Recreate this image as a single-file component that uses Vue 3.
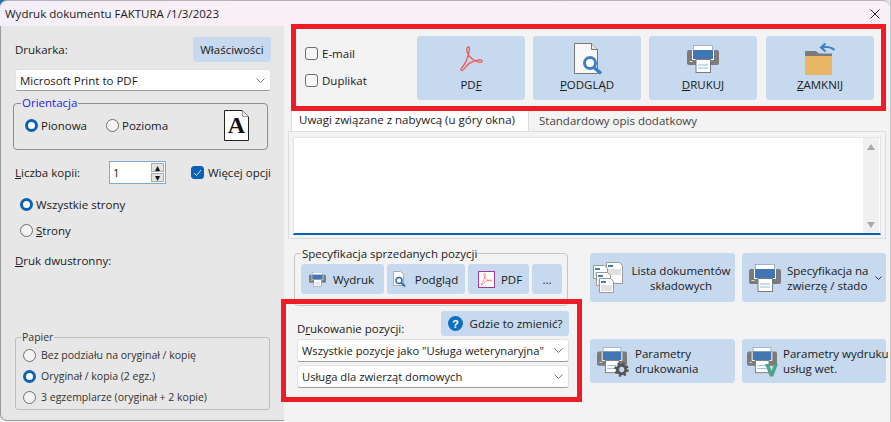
<script setup>
const topButtons = [
  { key: 'pdf', pre: 'PD', u: 'F', post: '' },
  { key: 'preview', pre: '', u: 'P', post: 'ODGLĄD' },
  { key: 'print', pre: '', u: 'D', post: 'RUKUJ' },
  { key: 'close', pre: '', u: 'Z', post: 'AMKNIJ' },
]
const docPages = [
  { x: 13, y: 0, w: 17, h: 22 },
  { x: 0, y: 3, w: 15, h: 14 },
  { x: 3, y: 10, w: 15, h: 14 },
  { x: 6, y: 16, w: 15, h: 15 },
]
</script>

<template>
  <div class="win">
    <svg width="0" height="0" class="defs">
      <defs>
        <symbol id="printer" viewBox="0 0 32 28">
          <rect x="6.500" y=".5" width="19" height="6" fill="#fff" stroke="#6f8fb0" stroke-width=".6"/>
          <path d="M2 5h28a2 2 0 0 1 2 2v11a2 2 0 0 1-2 2H2a2 2 0 0 1-2-2V7a2 2 0 0 1 2-2z" fill="#7b7b7b"/>
          <rect x="6" y="5" width="20" height="9" fill="#3f76b3"/>
          <path d="M5.500 5v9.500h21V5" fill="none" stroke="#fff"/>
          <rect x="2.500" y="16" width="3" height="1" fill="#ddd"/>
          <rect x="9" y="14.500" width="14.500" height="13" fill="#fff" stroke="#7b7b7b"/>
          <path d="M11 20h10M11 23h10" stroke="#8fb8dd"/>
        </symbol>
        <symbol id="acro" viewBox="0 0 24 26">
          <path d="M9.500 1C11 1 10.500 4 9.500 8 8.500 12 6 18 3.500 21 2 23 1.500 24 2.500 24.500 4 25 6 22 8 19.500 10 17 14 15 20 14 23 13.500 23.500 15 22.500 16 21 17 18 16 15.500 14.500 12 12.500 9 9 8 5.500 7.500 3 8 1 9.500 1z" fill="none" stroke="#ee5a58" stroke-width="1.300"/>
        </symbol>
      </defs>
    </svg>

    <header class="title">
      <span>Wydruk dokumentu FAKTURA /1/3/2023</span>
      <svg class="x" width="10" height="10" viewBox="0 0 10 10"><path d="M.5.5l9 9M9.500.5l-9 9" stroke="#222" fill="none"/></svg>
    </header>

    <div class="body">
      <aside class="left">
        <div class="row printer-head">
          <span>Drukarka:</span>
          <button class="btn props">Właściwości</button>
        </div>
        <div class="select printer"><span>Microsoft Print to PDF</span><svg class="chev" width="9" height="5" viewBox="0 0 9 5"><path d="M.5.500L4.500 4.500 8.500.5" fill="none" stroke="#777"/></svg></div>

        <fieldset class="orient">
          <legend>Orientacja</legend>
          <div class="orient-row">
            <label class="radio on"><i></i>Pionowa</label>
            <label class="radio"><i></i>Pozioma</label>
            <div class="page">
              <svg width="25" height="31" viewBox="0 0 25 31"><path d="M.5.500h18l6 6v24H.5z" fill="#fff" stroke="#222"/><path d="M18.500.500v6h6" fill="#eee" stroke="#999"/></svg>
              <b>A</b>
            </div>
          </div>
        </fieldset>

        <div class="row copies">
          <span class="copies-label"><u>L</u>iczba kopii:</span>
          <div class="spin">
            <span>1</span>
            <div class="arrows"><em>▴</em><em>▾</em></div>
          </div>
          <label class="check on"><i><svg width="9" height="8" viewBox="0 0 9 8"><path d="M1 4l2.500 2.500L8 1" fill="none" stroke="#cfe2f5"/></svg></i>Więcej opcji</label>
        </div>

        <div class="pages">
          <label class="radio on"><i></i>Wszystkie strony</label>
          <label class="radio"><i></i><span><u>S</u>trony</span></label>
        </div>

        <div class="duplex"><u>D</u>ruk dwustronny:</div>

        <fieldset class="paper">
          <legend>Papier</legend>
          <label class="radio"><i></i>Bez podziału na oryginał / kopię</label>
          <label class="radio on"><i></i>Oryginał / kopia (2 egz.)</label>
          <label class="radio"><i></i>3 egzemplarze (oryginał + 2 kopie)</label>
        </fieldset>
      </aside>

      <main class="right">
        <section class="actions">
          <div class="opts">
            <label class="check"><i></i>E-mail</label>
            <label class="check"><i></i>Duplikat</label>
          </div>
          <button v-for="b in topButtons" :key="b.key" class="btn big">
            <span class="big-icon">
              <svg v-if="b.key === 'pdf'" width="24" height="26"><use href="#acro"/></svg>
              <svg v-else-if="b.key === 'preview'" width="36" height="32" viewBox="0 0 36 32">
                <path d="M5.500 .5h17l6 6v24h-23z" fill="#f8f8f8" stroke="#777"/>
                <path d="M22.500.5v6h6" fill="#e6e6e6" stroke="#777"/>
                <circle cx="21" cy="20" r="5.500" fill="#fff" stroke="#3f7fbd" stroke-width="3"/>
                <path d="M25 24.500l7 6" stroke="#3f7fbd" stroke-width="3.500"/>
              </svg>
              <svg v-else-if="b.key === 'print'" width="32" height="28"><use href="#printer"/></svg>
              <svg v-else width="30" height="32" viewBox="0 0 30 32">
                <path d="M0 8h11l3 2.500H27V14H0z" fill="#7b7b7b"/>
                <rect x="0" y="13" width="27" height="19" fill="#e8b765"/>
                <path d="M29.500 7c-3-3-9-4-13-2M20.500 0.500L16 4.500l4.500 4" fill="none" stroke="#3f7fbd" stroke-width="2"/>
              </svg>
            </span>
            <span>{{ b.pre }}<u>{{ b.u }}</u>{{ b.post }}</span>
          </button>
        </section>

        <nav class="tabs">
          <span class="tab active">Uwagi związane z nabywcą (u góry okna)</span>
          <span class="tab">Standardowy opis dodatkowy</span>
        </nav>
        <div class="tab-panel">
          <div class="memo">
            <div class="scroll"><em></em><em class="down"></em></div>
          </div>
        </div>

        <div class="lower">
          <div class="lower-left">
            <fieldset class="spec">
              <legend>Specyfikacja sprzedanych pozycji</legend>
              <div class="spec-row">
                <button class="btn w1">
                  <svg width="17" height="15"><use href="#printer"/></svg>Wydruk
                </button>
                <button class="btn w2">
                  <svg width="16" height="16" viewBox="0 0 16 16"><path d="M1.500.5h7l3 3v11h-10z" fill="#fff" stroke="#aaa"/><circle cx="7" cy="9.500" r="3" fill="#fff" stroke="#2f6cae" stroke-width="1.500"/><path d="M9.500 12l3.500 3.500" stroke="#2f6cae" stroke-width="2"/></svg>Podgląd
                </button>
                <button class="btn w3">
                  <span class="pdf-mini"><svg width="12" height="13"><use href="#acro"/></svg></span>PDF
                </button>
                <button class="btn w4">...</button>
              </div>
            </fieldset>

            <div class="pos">
              <div class="pos-head">
                <span>D<u>r</u>ukowanie pozycji:</span>
                <button class="btn where">
                  <svg width="15" height="15" viewBox="0 0 16 16"><circle cx="8" cy="8" r="8" fill="#1070c0"/><text x="8" y="12.500" text-anchor="middle" font-size="12" font-weight="700" fill="#fff" font-family="Liberation Sans">?</text></svg>
                  Gdzie to zmienić?
                </button>
              </div>
              <div class="select pos-sel"><span>Wszystkie pozycje jako "Usługa weterynaryjna"</span><svg class="chev" width="9" height="5" viewBox="0 0 9 5"><path d="M.5.500L4.500 4.500 8.500.5" fill="none" stroke="#777"/></svg></div>
              <div class="select pos-sel"><span>Usługa dla zwierząt domowych</span><svg class="chev" width="9" height="5" viewBox="0 0 9 5"><path d="M.5.500L4.500 4.500 8.500.5" fill="none" stroke="#777"/></svg></div>
            </div>
          </div>

          <div class="tools">
            <button class="btn tool tall t1">
              <svg width="30" height="31" viewBox="0 0 30 31">
                <g v-for="(p, i) in docPages" :key="i" :transform="`translate(${p.x},${p.y})`">
                  <path :d="`M.5.500h${p.w - 4}l3 3v${p.h - 4}H.5z`" fill="#fff" stroke="#999"/>
                  <rect x="2" y="3" width="5" height="2" fill="#3f7fbd"/>
                  <path :d="`M2 8h${p.w - 4}M2 10h${p.w - 4}M2 12h${p.w - 4}`" stroke="#aaa" stroke-width=".7"/>
                </g>
              </svg>
              <span class="center">Lista dokumentów<br>składowych</span>
            </button>
            <button class="btn tool tall t2">
              <svg width="32" height="30"><use href="#printer"/></svg>
              <span>Specyfikacja na<br>zwierzę / stado</span>
              <svg class="chev small" width="7" height="4" viewBox="0 0 7 4"><path d="M.5.500L3.500 3.500 6.500.5" fill="none" stroke="#333"/></svg>
            </button>
            <button class="btn tool t3">
              <span class="ic">
                <svg width="30" height="28"><use href="#printer"/></svg>
                <svg class="over gear" width="15" height="15" viewBox="0 0 16 16"><circle cx="8" cy="8" r="4.500" fill="none" stroke="#555" stroke-width="3"/><circle cx="8" cy="8" r="6.500" fill="none" stroke="#555" stroke-width="2.500" stroke-dasharray="2.500 2.600"/></svg>
              </span>
              <span>Parametry<br>drukowania</span>
            </button>
            <button class="btn tool t4">
              <span class="ic">
                <svg width="30" height="28"><use href="#printer"/></svg>
                <svg class="over vee" width="17" height="14" viewBox="0 0 14 13"><path d="M1 1h3.500L7 7.500 9.500 1H13L8.500 12.500h-3z" fill="#4aa684"/></svg>
              </span>
              <span>Parametry wydruku<br>usług wet.</span>
            </button>
          </div>
        </div>
      </main>
    </div>

    <div class="mark mark-top"></div>
    <div class="mark mark-bottom"></div>
  </div>
</template>

<style>
html, body { margin: 0; background: #f3f3f3; }
</style>

<style scoped>
.win {
  position: relative;
  width: 891px;
  height: 422px;
  box-sizing: border-box;
  border-right: 1px solid #c4c4c4;
  overflow: hidden;
  font-family: "Open Sans", "Liberation Sans", sans-serif;
  font-size: 11.500px;
  color: #1a1a1a;
  background: linear-gradient(90deg, #2a6fb0 28px, #e4e4e4 28px) top / 100% 8px no-repeat, #f3f3f3;
}
.defs { position: absolute; }
.title {
  height: 26px;
  box-sizing: border-box;
  padding: 0 10px 0 5px;
  display: flex;
  align-items: center;
  justify-content: space-between;
  background: linear-gradient(90deg, #f3eef7, #faf0f5 30%, #f8f0f6);
  border-top: 1px solid #b4b4b4;
  border-radius: 7px 7px 0 0;
  font-size: 11.500px;
}
.body { display: flex; height: 396px; }
.left {
  width: 284px;
  box-sizing: border-box;
  padding: 11px 13px 0 14px;
  background: #e7e7e7;
  border-left: 1px solid #9a9a9a;
  border-bottom: 1px solid #9a9a9a;
  border-bottom-left-radius: 7px;
  margin-bottom: 1px;
  flex: none;
}
.row { display: flex; align-items: center; }
.printer-head { justify-content: space-between; height: 25px; }
.btn {
  border: 0;
  padding: 0;
  margin: 0;
  background: #c6d9ee;
  border-radius: 3px;
  font: inherit;
  color: inherit;
  display: flex;
  align-items: center;
  justify-content: center;
}
.props { width: 78px; height: 25px; }
.select {
  display: flex;
  align-items: center;
  justify-content: space-between;
  background: #fff;
  border-radius: 3px;
  box-sizing: border-box;
  padding: 0 5px 0 4px;
  border: 1px solid #e2e2e2;
  border-bottom-color: #9c9c9c;
}
.printer { width: 256px; height: 22px; margin-top: 7px; }
fieldset { margin: 0; min-width: 0; box-sizing: border-box; }
.orient {
  width: 255px;
  height: 54px;
  margin: 5px 0 0 -2px;
  padding: 0 8px 0 11px;
  border: 1px solid #8e8e8e;
  border-radius: 4px;
}
.orient legend { color: #2222ee; padding: 0 1px; margin-left: -4px; line-height: 14px; }
.orient-row { display: flex; align-items: center; height: 31px; }
.radio { display: flex; align-items: center; white-space: nowrap; }
.radio i {
  width: 13px;
  height: 13px;
  box-sizing: border-box;
  border: 1px solid #6e6e6e;
  border-radius: 50%;
  background: #f4f4f4;
  margin-right: 3px;
  flex: none;
}
.radio.on i { border: 3.500px solid #0a62b4; background: #fff; }
.orient .radio + .radio { margin-left: 19px; }
.page { position: relative; margin-left: auto; margin-right: 10px; height: 31px; width: 25px; margin-top: -1px; }
.page svg { display: block; }
.page b { position: absolute; left: 0; right: 0; top: 2px; text-align: center; font: 700 24px "Liberation Serif", serif; color: #111; }
.copies { margin-top: 11px; height: 23px; }
.copies-label { width: 94px; flex: none; }
.spin {
  width: 57px;
  height: 23px;
  box-sizing: border-box;
  border: 1px solid #7fa9d6;
  background: #fff;
  display: flex;
  align-items: center;
  justify-content: space-between;
  padding: 0 1px 0 3px;
}
.arrows { display: flex; flex-direction: column; width: 13px; gap: 1px; }
.arrows em {
  background: #e4e4e4;
  border: 1px solid #aaa;
  font: 10px/7px "DejaVu Sans", sans-serif;
  text-align: center;
  color: #111;
  box-sizing: content-box;
  height: 7px;
  width: 11px;
}
.check { display: flex; align-items: center; white-space: nowrap; }
.check i {
  width: 13px;
  height: 13px;
  box-sizing: border-box;
  border: 1px solid #6e6e6e;
  border-radius: 3px;
  background: #f6f6f6;
  margin-right: 4px;
  display: flex;
  align-items: center;
  justify-content: center;
}
.check.on i { background: #0a62b4; border-color: #0a62b4; }
.copies .check { margin-left: 25px; }
.pages { display: flex; flex-direction: column; gap: 13px; margin: 14px 0 0 5px; }
.pages .radio { height: 13px; }
.duplex { margin-top: 16px; line-height: 16px; }
.paper {
  width: 255px;
  height: 79px;
  margin-top: 62px;
  padding: 0 0 0 7px;
  border: 1px solid #bdbdbd;
  border-radius: 3px;
  font-size: 10.500px;
  display: flex;
  flex-direction: column;
  gap: 7px;
  color: #333;
}
.paper legend { padding: 0 1px; margin-left: -2px; line-height: 13px; }
.paper .radio { height: 14px; }
.paper .radio i { margin-right: 5px; }
.paper .radio:first-of-type { margin-top: 4px; }
.right { flex: 1; min-width: 0; padding: 10px 4px 0 4px; }
.actions { display: flex; align-items: stretch; height: 64px; gap: 8px; padding-left: 17px; }
.opts { width: 104px; display: flex; flex-direction: column; justify-content: space-between; flex: none; box-sizing: border-box; padding: 10px 0 12px; }
.big { flex-direction: column; width: 108px; justify-content: flex-start; padding-top: 6px; box-sizing: border-box; }
.big:last-child { margin-left: 1px; }
.big-icon { height: 33px; display: flex; align-items: center; justify-content: center; margin-bottom: 2px; }
.big-icon svg { display: block; }
.tabs { display: flex; margin: 10px 0 0 3px; height: 21px; align-items: flex-end; position: relative; z-index: 1; }
.tab { padding: 0 10px; height: 20px; line-height: 19px; box-sizing: border-box; color: #444; }
.tab.active { width: 238px; padding: 0 7px; background: #fff; height: 21px; color: #222; border: 1px solid #dcdcdc; border-bottom: 0; border-top: 0; }
.tab-panel { border: 1px solid #dcdcdc; background: #f3f3f3; height: 108px; box-sizing: border-box; padding: 5px 4px 3px; }
.memo { height: 98px; background: #fff; border-bottom: 2px solid #0a62b4; display: flex; justify-content: flex-end; box-sizing: border-box; padding-right: 1px; border-top: 1px solid #e4e4e4; border-left: 1px solid #e4e4e4; border-right: 1px solid #e4e4e4;}
.scroll { width: 16px; background: #f0f0f0; display: flex; flex-direction: column; justify-content: space-between; align-items: center; padding: 6px 0 5px; box-sizing: border-box; }
.scroll em { border: 4px solid transparent; border-bottom: 6px solid #a9a9a9; border-top: 0; width: 0; height: 0; }
.scroll em.down { border-bottom: 0; border-top: 6px solid #a9a9a9; }
.lower { display: flex; margin-top: 7px; }
.lower-left { width: 298px; flex: none; padding-left: 2px; box-sizing: border-box; }
.spec {
  width: 274px;
  height: 60px;
  margin: 0 0 0 4px;
  border: 1px solid #c6c6c6;
  border-radius: 4px;
  padding: 0 0 0 6px;
}
.spec legend { padding: 0 1px; margin-left: 0; line-height: 15px; }
.spec-row { display: flex; gap: 3px; margin-top: 3px; }
.spec-row .btn { height: 30px; gap: 7px; padding-right: 2px; box-sizing: border-box; }
.w1 { width: 83px; }
.w2 { width: 78px; }
.spec-row .w3 { width: 61px; padding: 0 0 0 3px; gap: 6px; }
.spec-row .w4 { width: 30px; padding: 0; }
.pdf-mini { width: 15px; height: 15px; border: 1px solid #a0379c; background: #fff; display: flex; align-items: center; justify-content: center; }
.pos { margin: 5px 0 0 7px; width: 272px; }
.pos-head { display: flex; justify-content: space-between; align-items: flex-end; height: 25px; margin-bottom: 3px; }
.where { width: 128px; height: 25px; gap: 7px; }
.pos-sel { height: 23px; margin-bottom: 3px; font-size: 11.200px; }
.tools { display: grid; grid-template-columns: 145px 144px; column-gap: 7px; grid-template-rows: 49px 44px; row-gap: 37px; margin-top: 7px; margin-left: 4px; align-self: flex-start; }
.tool { justify-content: flex-start; padding: 0 3px 0 4px; text-align: left; line-height: 15px; gap: 1px; white-space: nowrap; }
.tall svg { flex: none; }
.t1 { padding-left: 3px; gap: 7px; }
.t2 { padding-left: 7px; gap: 6px; }
.center { text-align: center; flex: 1; }
.small { margin-left: auto; margin-right: 2px; }
.ic { position: relative; width: 40px; height: 32px; flex: none; display: block; }
.ic > svg:first-child { position: absolute; left: 3px; top: 1px; }
.over { position: absolute; }
.gear { left: 20px; top: 17px; }
.vee { left: 17px; top: 18px; }
.t4 { gap: 0; padding-right: 0; }
.t4 .ic { width: 37px; }
.t4 .ic > svg:first-child { left: 1px; }
.mark { position: absolute; border: 5px solid #ee1c25; box-sizing: border-box; pointer-events: none; z-index: 3; }
.mark-top { left: 291px; top: 24px; width: 595px; height: 87px; }
.mark-bottom { left: 281px; top: 299px; width: 301px; height: 103px; }
</style>
